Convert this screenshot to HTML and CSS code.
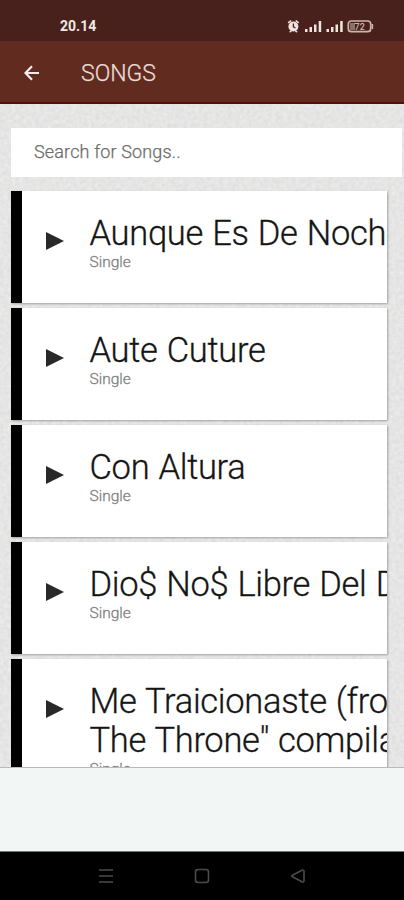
FILE: index.html
```html
<!DOCTYPE html>
<html lang="en">
<head>
<meta charset="utf-8">
<title>Songs</title>
<link rel="stylesheet" href="styles.css">
</head>
<body>
<div class="screen">
  <div class="status">
    <span class="clock">20.14</span>
    <svg class="status-icons" width="88" height="16" viewBox="0 0 88 16">
      <g fill="#f0e4df">
        <circle cx="6.4" cy="8.5" r="5"/>
        <path d="M0.6 4.2 3.6 1.9 4.6 3 1.7 5.4zM12.2 4.2 9.2 1.9 8.2 3 11.1 5.4zM2 14l2-2 1 1-1.3 1.4zM10.8 14l-2-2-1 1 1.3 1.4z"/>
        <path d="M18 11h2.500v3H18zM22.500 9H25v5h-2.500zM27 6.500h2.500V14H27zM31.700 3h2.500V14h-2.500zM39.500 11H42v3h-2.500zM44 9h2.500v5H44zM48.500 6.500H51V14h-2.500zM53.200 3h2.500V14h-2.500z"/>
      </g>
      <path d="M6.400 5.500v3.300l2 1.200" fill="none" stroke="#4a211c" stroke-width="1.300"/>
      <rect x="61.300" y="3" width="22.400" height="10.700" rx="3" fill="none" stroke="#ccb5ae" stroke-width="1.700"/>
      <path d="M63 5h5v7h-5z" fill="#8b706a"/>
      <path d="M85.400 6v5" stroke="#ccb5ae" stroke-width="1.500"/>
      <text x="72.700" y="11.700" class="battery">72</text>
    </svg>
  </div>
  <header class="bar">
    <svg class="back" width="16" height="16" viewBox="0 0 16 16"><path d="M15 8H1.500M8 1.200 1.500 8 8 14.800" fill="none" stroke="#f5ebe8" stroke-width="2.200"/></svg>
    <h1 class="title">SONGS</h1>
  </header>
  <main class="content">
    <svg class="paper" width="404" height="664">
      <filter id="grain" x="0" y="0" width="100%" height="100%" color-interpolation-filters="sRGB">
        <feTurbulence type="fractalNoise" baseFrequency="0.25" numOctaves="3" seed="4"/>
        <feColorMatrix values="0.08 0 0 0 0.858  0.08 0 0 0 0.858  0.08 0 0 0 0.856  0 0 0 0 1"/>
      </filter>
      <rect width="404" height="664" filter="url(#grain)"/>
    </svg>
    <div class="search">Search for Songs..</div>
    <div class="list">
      <div class="card"><svg class="play" viewBox="0 0 18 18"><path d="M0 0 18 9 0 18z"/></svg><div class="song"><div class="name">Aunque Es De Noche</div><div class="kind">Single</div></div></div>
      <div class="card"><svg class="play" viewBox="0 0 18 18"><path d="M0 0 18 9 0 18z"/></svg><div class="song"><div class="name">Aute Cuture</div><div class="kind">Single</div></div></div>
      <div class="card"><svg class="play" viewBox="0 0 18 18"><path d="M0 0 18 9 0 18z"/></svg><div class="song"><div class="name">Con Altura</div><div class="kind">Single</div></div></div>
      <div class="card"><svg class="play" viewBox="0 0 18 18"><path d="M0 0 18 9 0 18z"/></svg><div class="song"><div class="name">Dio$ No$ Libre Del Dinero</div><div class="kind">Single</div></div></div>
      <div class="card"><svg class="play" viewBox="0 0 18 18"><path d="M0 0 18 9 0 18z"/></svg><div class="song"><div class="name">Me Traicionaste (from "For<br>The Throne" compilation)</div><div class="kind">Single</div></div></div>
    </div>
  </main>
  <div class="banner"></div>
  <nav class="nav">
    <svg viewBox="0 0 16 16"><path d="M1 2h14M1 8h14M1 14h14"/></svg>
    <svg viewBox="0 0 16 16"><rect x="1.500" y="1.500" width="13" height="13" rx="2.500"/></svg>
    <svg viewBox="0 0 16 16"><path d="M2.500 7.200 12 2.200Q14 1.500 14 3.500V12.500Q14 14.500 12 13.800L2.500 8.800Q1 8 2.500 7.200z"/></svg>
  </nav>
</div>
</body>
</html>
```
FILE: styles.css
```css
* { box-sizing: border-box; }
body { margin: 0; font-family: Roboto, sans-serif; }
.screen { width: 404px; height: 900px; display: flex; flex-direction: column; overflow: hidden; }
.status { height: 41px; flex: none; background: #48211c; display: flex; justify-content: space-between; align-items: flex-start; padding: 18px 29px 0 60px; }
.clock { font-size: 14px; line-height: 17px; font-weight: 700; color: #f2e8e4; }
.status-icons { display: block; }
.battery { font-size: 9px; font-weight: 500; fill: #ccb5ae; text-anchor: middle; }
.bar { height: 63px; flex: none; background: #612c1f; border-bottom: 2px solid #560d10; display: flex; align-items: center; padding: 2px 0 0 24px; }
.back { display: block; }
.title { margin: 3px 0 0 41px; font-size: 23px; line-height: 28px; font-weight: 300; color: #eadcd7; -webkit-text-stroke: 0.25px #eadcd7; }
.content { position: relative; height: 664px; flex: none; overflow: hidden; padding: 24px 2px 0 11px; background: #e6e6e5; border-bottom: 1px solid #b9bbbb; }
.paper { position: absolute; left: 0; top: 0; }
.search { position: relative; height: 49px; background: #fff; padding-left: 23px; font-size: 18px; line-height: 48px; font-weight: 300; color: #6b6b6b; -webkit-text-stroke: 0.25px #6b6b6b; letter-spacing: 0.15px; }
.list { position: relative; margin-top: 14px; width: 376px; display: flex; flex-direction: column; gap: 5px; }
.card { min-height: 112px; background: #fff; border-left: 11px solid #000; box-shadow: 1px 1px 2px rgba(0, 0, 0, 0.3); display: flex; align-items: flex-start; overflow: hidden; padding: 23px 0 20px 24px; }
.play { width: 18px; height: 18px; flex: none; margin-top: 18px; fill: #292929; }
.song { flex: none; margin-left: 25.5px; }
.name { font-size: 34.5px; line-height: 39px; font-weight: 300; letter-spacing: -0.3px; word-spacing: 1px; color: #151515; -webkit-text-stroke: 0.3px #151515; white-space: nowrap; }
.kind { font-size: 15.5px; line-height: 18px; font-weight: 300; color: #808080; -webkit-text-stroke: 0.3px #808080; }
.banner { height: 84px; flex: none; background: #f2f7f6; border-bottom: 1px solid #777; }
.nav { height: 48px; flex: none; background: #000; display: flex; justify-content: space-between; align-items: center; padding: 0 98px 0 98px; }
.nav svg { width: 16px; height: 16px; fill: none; stroke: #4b4b4b; stroke-width: 1.6; }
```
